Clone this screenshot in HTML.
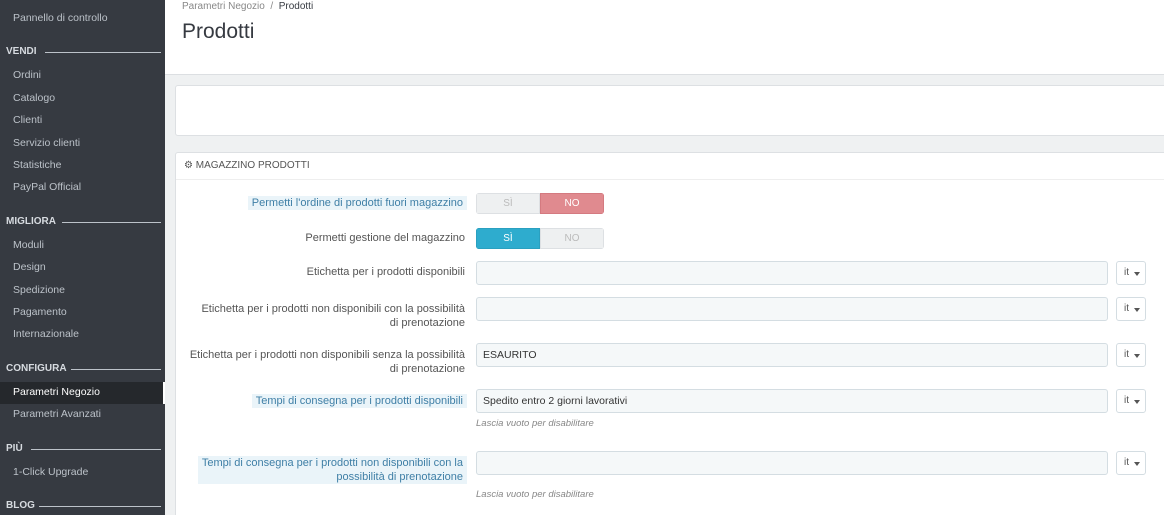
<!DOCTYPE html><html><head><style>
*{margin:0;padding:0;box-sizing:border-box}
html,body{width:1164px;height:515px;overflow:hidden}
body{font-family:"Liberation Sans",sans-serif;font-size:10.5px;color:#363a41;background:#eff1f2;position:relative}
.sb{position:absolute;left:0;top:0;width:165px;height:515px;background:#363a41;color:#bcc2c9}
.sb div{position:absolute;left:13px;font-size:10.5px}
.sb .h{left:6px;font-weight:bold;color:#d7dbe0;font-size:10px}
.sb .h span{position:absolute;top:6px;height:1px;background:#bcc2c9}
.sb .act{position:absolute;left:0;top:382px;width:165px;height:22px;background:#25282c}
.sb .act:after{content:"";position:absolute;right:0;top:0;width:2px;height:22px;background:#fff}
.top{position:absolute;left:165px;top:0;right:0;height:75px;background:#fff;border-bottom:1px solid #dcdfe2}
.p1{position:absolute;left:175px;top:85px;width:995px;height:51px;background:#fff;border:1px solid #dde0e3;border-radius:3px}
.p2{position:absolute;left:175px;top:152px;width:995px;height:380px;background:#fff;border:1px solid #dde0e3;border-radius:3px}
.ph{position:absolute;left:0;top:0;right:0;height:27px;border-bottom:1px solid #eee;font-size:10px;padding:7px 0 0 8px;color:#555}
.l{position:absolute;right:699px;text-align:right;color:#555;line-height:14px;font-size:11px}
.l.b{background:#eaf4f9;color:#3f7fa6;padding:0 4px}
.in{position:absolute;left:476px;width:632px;height:24px;background:#f5f8f9;border:1px solid #d4dde2;border-radius:3px;padding:5px 6px;color:#333}
.lg{position:absolute;left:1116px;width:30px;height:24px;border:1px solid #d4dde2;border-radius:3px;background:#fff;font-size:10px;padding:5px 0 0 7px;color:#555}
.lg:after{content:"";position:absolute;left:17px;top:10px;border:3px solid transparent;border-top:4px solid #555}
.hint{position:absolute;left:476px;font-style:italic;color:#888;font-size:9.5px}
.tg{position:absolute;left:476px;width:128px;height:21px;display:flex;border-radius:3px;overflow:hidden}
.tg span{flex:1;text-align:center;line-height:19px;font-size:10px;background:#eef0f1;color:#bbb;border:1px solid #dde0e3}
</style></head><body>
<div class="sb">
<div style="top:12px">Pannello di controllo</div>
<div class="h" style="top:46px">VENDI<span style="left:39px;width:116px"></span></div>
<div style="top:69px">Ordini</div><div style="top:92px">Catalogo</div><div style="top:114px">Clienti</div><div style="top:137px">Servizio clienti</div><div style="top:159px">Statistiche</div><div style="top:181px">PayPal Official</div>
<div class="h" style="top:216px">MIGLIORA<span style="left:56px;width:99px"></span></div>
<div style="top:239px">Moduli</div><div style="top:261px">Design</div><div style="top:284px">Spedizione</div><div style="top:306px">Pagamento</div><div style="top:328px">Internazionale</div>
<div class="h" style="top:363px">CONFIGURA<span style="left:65px;width:90px"></span></div>
<div class="act"></div>
<div style="top:386px;color:#fff">Parametri Negozio</div>
<div style="top:408px">Parametri Avanzati</div>
<div class="h" style="top:443px">PIÙ<span style="left:25px;width:130px"></span></div>
<div style="top:466px">1-Click Upgrade</div>
<div class="h" style="top:500px">BLOG<span style="left:33px;width:122px"></span></div>
</div>
<div class="top">
<div style="position:absolute;left:17px;top:1px;color:#888;font-size:10px">Parametri Negozio &nbsp;/&nbsp; <span style="color:#363a41">Prodotti</span></div>
<div style="position:absolute;left:17px;top:20px;font-size:21px;color:#363a41">Prodotti</div>
</div>
<div class="p1"></div>
<div class="p2"><div class="ph">⚙ MAGAZZINO PRODOTTI</div></div>
<div class="l b" style="top:196px;right:697px">Permetti l'ordine di prodotti fuori magazzino</div>
<div class="tg" style="top:193px"><span>SÌ</span><span style="background:#e08a8f;color:#fff;border-color:#d47a80">NO</span></div>
<div class="l" style="top:231px">Permetti gestione del magazzino</div>
<div class="tg" style="top:228px"><span style="background:#2eacce;color:#fff;border-color:#2aa0c0">SÌ</span><span>NO</span></div>
<div class="l" style="top:265px">Etichetta per i prodotti disponibili</div>
<div class="in" style="top:261px"></div><div class="lg" style="top:261px">it</div>
<div class="l" style="top:302px">Etichetta per i prodotti non disponibili con la possibilità<br>di prenotazione</div>
<div class="in" style="top:297px"></div><div class="lg" style="top:297px">it</div>
<div class="l" style="top:348px">Etichetta per i prodotti non disponibili senza la possibilità<br>di prenotazione</div>
<div class="in" style="top:343px">ESAURITO</div><div class="lg" style="top:343px">it</div>
<div class="l b" style="top:394px;right:697px">Tempi di consegna per i prodotti disponibili</div>
<div class="in" style="top:389px">Spedito entro 2 giorni lavorativi</div><div class="lg" style="top:389px">it</div>
<div class="hint" style="top:418px">Lascia vuoto per disabilitare</div>
<div class="l b" style="top:456px;right:697px">Tempi di consegna per i prodotti non disponibili con la<br>possibilità di prenotazione</div>
<div class="in" style="top:451px"></div><div class="lg" style="top:451px">it</div>
<div class="hint" style="top:489px">Lascia vuoto per disabilitare</div>
</body></html>
